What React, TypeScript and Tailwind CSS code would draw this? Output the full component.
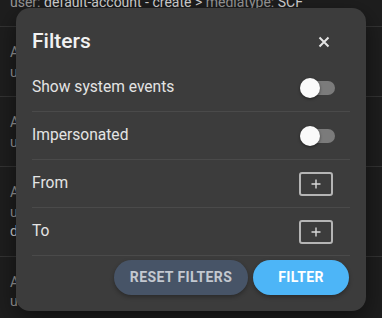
import React from 'react';

const events = [
  { title: 'Audit event: mediatype created', user: 'default-account - create', target: 'SCF', extra: '' },
  { title: 'Audit event: mediatype updated', user: 'default-account - update', target: 'SCF', extra: '' },
  { title: 'Audit event: mediatype updated', user: 'default-account - update', target: 'MP4', extra: '' },
  { title: 'Audit event: account impersonated', user: 'admin - impersonate', target: 'default-account', extra: 'details: session started' },
  { title: 'Audit event: mediatype deleted', user: 'admin - delete', target: 'MP4', extra: '' },
];

const Toggle: React.FC = () => (
  <div className="relative mr-[15px] flex h-[20px] w-[35px] items-center">
    <div className="h-[14px] w-[35px] rounded-full bg-[#7b7b7b]" />
    <div className="absolute left-0 top-0 h-[20px] w-[20px] rounded-full bg-[#fafafa] shadow-[0_1px_3px_rgba(0,0,0,0.5)]" />
  </div>
);

const AddButton: React.FC = () => (
  <button className="mr-[17px] flex h-[24px] w-[34px] items-center justify-center rounded-[3px] border-2 border-[#b5b5b5]">
    <svg width="12" height="12" viewBox="0 0 12 12" fill="none" stroke="#d8d8d8" strokeWidth="1.4">
      <path d="M6 1.5v9M1.5 6h9" />
    </svg>
  </button>
);

export default function App() {
  const rows = [
    { label: 'Show system events', control: <Toggle /> },
    { label: 'Impersonated', control: <Toggle /> },
    { label: 'From', control: <AddButton /> },
    { label: 'To', control: <AddButton /> },
  ];

  return (
    <div className="relative h-[318px] w-[382px] overflow-hidden bg-[#1e1e1e] font-['Roboto',sans-serif]">
      <div className="-mt-[43px]">
        {events.map((e, i) => (
          <div key={i} className="border-b border-[#343434] px-[10px] pt-[16px] pb-[14px] text-[14px] leading-[19.5px]">
            <div className="whitespace-nowrap text-[#9a9a9a]">{e.title}</div>
            <div className="whitespace-nowrap text-[#9a9a9a]">
              user: <span className="text-[#d6d6d6]">{e.user} &gt;</span> mediatype: <span className="text-[#d6d6d6]">{e.target}</span>
            </div>
            {e.extra && <div className="whitespace-nowrap text-[#d6d6d6]">{e.extra}</div>}
          </div>
        ))}
      </div>

      <div className="absolute left-[16px] top-[8px] h-[303px] w-[350px] rounded-[14px] bg-[#3c3c3c] px-[16px] pt-[14px] shadow-[0_8px_24px_rgba(0,0,0,0.5)]">
        <div className="mb-[2px] flex h-[40px] items-center justify-between">
          <h2 className="text-[21px] font-medium text-[#f2f2f2]">Filters</h2>
          <button className="mr-[20px] flex h-[12px] w-[12px] items-center justify-center">
            <svg width="12" height="12" viewBox="0 0 12 12" fill="none" stroke="#e4e4e4" strokeWidth="2">
              <path d="M1.5 1.5l9 9M10.5 1.5l-9 9" />
            </svg>
          </button>
        </div>

        {rows.map((r) => (
          <div key={r.label} className="flex h-[48px] items-center justify-between border-b border-[#4a4a4a]">
            <span className="text-[15.6px] text-[#e4e4e4]">{r.label}</span>
            {r.control}
          </div>
        ))}

        <div className="mt-[4px] flex justify-end gap-[5px] pr-[1px]">
          <button className="h-[35px] w-[134px] rounded-full bg-[#475467] text-[14px] font-bold tracking-[0.4px] text-[#c3c8d0] shadow-[0_2px_4px_rgba(0,0,0,0.3)]">
            RESET FILTERS
          </button>
          <button className="h-[35px] w-[96px] rounded-full bg-[#4db5f7] text-[14px] font-bold tracking-[0.4px] text-white shadow-[0_2px_4px_rgba(0,0,0,0.3)]">
            FILTER
          </button>
        </div>
      </div>
    </div>
  );
}
